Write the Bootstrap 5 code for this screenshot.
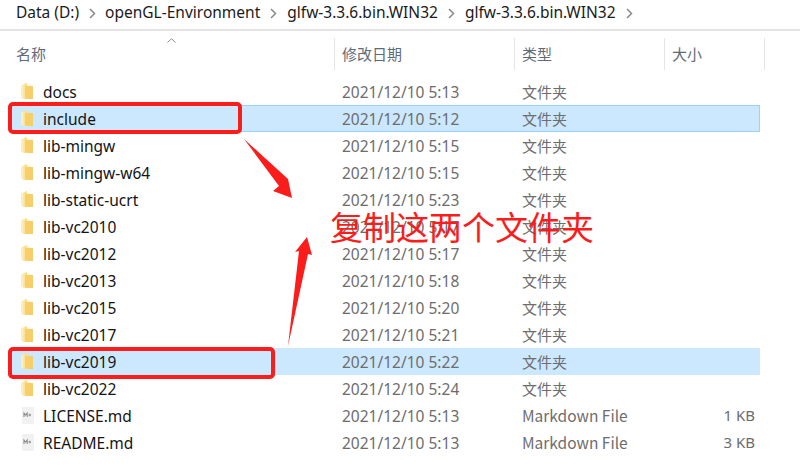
<!DOCTYPE html>
<html lang="zh-CN">
<head>
<meta charset="utf-8">
<title>glfw-3.3.6.bin.WIN32</title>
<link href="https://cdn.jsdelivr.net/npm/bootstrap@5.3.0/dist/css/bootstrap.min.css" rel="stylesheet">
<style>
html,body{background:#fff;margin:0;height:469px;overflow:hidden}
body{position:relative;width:800px;font-family:"Noto Sans","Noto Sans CJK SC",sans-serif;font-size:15.5px;color:#1b1b1b}
.crumbs{height:31px;border-bottom:2px solid #e3e3e3;padding-left:16px;padding-bottom:3px;align-items:center;white-space:nowrap}
.crumbs svg{flex:none}
.sep1{margin:0 10px}
.sep1.first{margin:0 9px 0 10px}
.heads{height:32px;margin-top:7px;color:#5f6b78;font-size:15px;font-family:"Noto Sans CJK SC","Noto Sans",sans-serif}
.hcell{height:32px;padding-left:7px;border-right:1px solid #e5e5e5;line-height:31px}
.hname{width:335px;padding-left:16px;position:relative}
.hdate{width:180px}.htype{width:150px}.hsize{width:100px}
.caret{position:absolute;left:167px;top:0;width:9px;height:5px}
.ftable{margin-top:8px;padding-left:10px}
.frow{height:27px;width:750px;align-items:center;border:1px solid transparent;line-height:25px}
.frow.sel{background:#cce8ff;border-color:#99d1ff}
.frow.sel2{background:#cce8ff;border-color:#cce8ff}
.fico{width:32px;padding-left:10px;flex:none}
.fname{width:299px;flex:none;color:#141414;padding-top:2px}
.fdate{width:180px;flex:none;color:#6d6d6d;padding-top:2px}
.ftype{width:150px;flex:none;color:#6d6d6d;font-size:15px;font-family:"Noto Sans CJK SC","Noto Sans",sans-serif}
.ftype.latin{font-size:15.5px}
.fsize{flex:1;text-align:right;padding-right:4px;color:#6d6d6d;font-size:15px}
.redbox{position:absolute;border:4px solid #fb1c1c;border-radius:5px}
.rb1{left:8px;top:102px;width:234px;height:32px}
.rb2{left:8px;top:347px;width:267px;height:32px}
.marks{position:absolute;left:0;top:0;pointer-events:none}
.bigtext{position:absolute;left:330px;top:203px;font-family:"Noto Sans CJK SC",sans-serif;font-size:33px;line-height:46px;color:#fb1c1c;white-space:nowrap}
</style>
</head>
<body>
<svg width="0" height="0" class="d-block" aria-hidden="true">
<defs>
<linearGradient id="fg" x1="0" y1="0" x2="1" y2="0"><stop offset="0" stop-color="#fde9a8"/><stop offset=".55" stop-color="#f8d474"/><stop offset="1" stop-color="#f1c154"/></linearGradient>
<symbol id="folder" viewBox="0 0 12 17"><path d="M0 2.5 2 1.6V15.6L0 14.8Z" fill="#fdeebd"/><path d="M2 1.6 6 0V2.5L12 3.2V16H2Z" fill="url(#fg)"/><path d="M4 3 12 4V15.6H4Z" fill="#f6cf6b"/></symbol>
<symbol id="mdfile" viewBox="0 0 14 17"><path d="M1 0H13V17H1Z" fill="#f1f1f1"/><path d="M3 10V6L4.6 8 6.2 6V10M7.5 8H10M8.8 6.8V9.2" fill="none" stroke="#8b8b8b" stroke-width="1.1"/></symbol>
<symbol id="chev" viewBox="0 0 7 11"><path d="M1 1 5.5 5.5 1 10" fill="none" stroke="#8a8a8a" stroke-width="1.5"/></symbol>
</defs>
</svg>

<div class="crumbs d-flex">
  <span>Data (D:)</span>
  <svg class="sep1 first" width="7" height="11"><use href="#chev"/></svg>
  <span>openGL-Environment</span>
  <svg class="sep1" width="7" height="11"><use href="#chev"/></svg>
  <span>glfw-3.3.6.bin.WIN32</span>
  <svg class="sep1" width="7" height="11"><use href="#chev"/></svg>
  <span>glfw-3.3.6.bin.WIN32</span>
  <svg class="sep1" width="7" height="11"><use href="#chev"/></svg>
</div>

<div class="heads d-flex">
  <div class="hcell hname">名称<svg class="caret" viewBox="0 0 9 5"><path d="M.5 4.5 4.5.7 8.5 4.5" fill="none" stroke="#8a8a8a"/></svg></div>
  <div class="hcell hdate">修改日期</div>
  <div class="hcell htype">类型</div>
  <div class="hcell hsize">大小</div>
</div>

<div class="ftable" id="files">
  <div class="frow d-flex"><div class="fico"><svg class="d-block" width="12" height="17"><use href="#folder"/></svg></div><div class="fname">docs</div><div class="fdate">2021/12/10 5:13</div><div class="ftype">文件夹</div></div>
  <div class="frow sel d-flex"><div class="fico"><svg class="d-block" width="12" height="17"><use href="#folder"/></svg></div><div class="fname">include</div><div class="fdate">2021/12/10 5:12</div><div class="ftype">文件夹</div></div>
  <div class="frow d-flex"><div class="fico"><svg class="d-block" width="12" height="17"><use href="#folder"/></svg></div><div class="fname">lib-mingw</div><div class="fdate">2021/12/10 5:15</div><div class="ftype">文件夹</div></div>
  <div class="frow d-flex"><div class="fico"><svg class="d-block" width="12" height="17"><use href="#folder"/></svg></div><div class="fname">lib-mingw-w64</div><div class="fdate">2021/12/10 5:15</div><div class="ftype">文件夹</div></div>
  <div class="frow d-flex"><div class="fico"><svg class="d-block" width="12" height="17"><use href="#folder"/></svg></div><div class="fname">lib-static-ucrt</div><div class="fdate">2021/12/10 5:23</div><div class="ftype">文件夹</div></div>
  <div class="frow d-flex"><div class="fico"><svg class="d-block" width="12" height="17"><use href="#folder"/></svg></div><div class="fname">lib-vc2010</div><div class="fdate">2021/12/10 5:17</div><div class="ftype">文件夹</div></div>
  <div class="frow d-flex"><div class="fico"><svg class="d-block" width="12" height="17"><use href="#folder"/></svg></div><div class="fname">lib-vc2012</div><div class="fdate">2021/12/10 5:17</div><div class="ftype">文件夹</div></div>
  <div class="frow d-flex"><div class="fico"><svg class="d-block" width="12" height="17"><use href="#folder"/></svg></div><div class="fname">lib-vc2013</div><div class="fdate">2021/12/10 5:18</div><div class="ftype">文件夹</div></div>
  <div class="frow d-flex"><div class="fico"><svg class="d-block" width="12" height="17"><use href="#folder"/></svg></div><div class="fname">lib-vc2015</div><div class="fdate">2021/12/10 5:20</div><div class="ftype">文件夹</div></div>
  <div class="frow d-flex"><div class="fico"><svg class="d-block" width="12" height="17"><use href="#folder"/></svg></div><div class="fname">lib-vc2017</div><div class="fdate">2021/12/10 5:21</div><div class="ftype">文件夹</div></div>
  <div class="frow sel2 d-flex"><div class="fico"><svg class="d-block" width="12" height="17"><use href="#folder"/></svg></div><div class="fname">lib-vc2019</div><div class="fdate">2021/12/10 5:22</div><div class="ftype">文件夹</div></div>
  <div class="frow d-flex"><div class="fico"><svg class="d-block" width="12" height="17"><use href="#folder"/></svg></div><div class="fname">lib-vc2022</div><div class="fdate">2021/12/10 5:24</div><div class="ftype">文件夹</div></div>
  <div class="frow d-flex"><div class="fico"><svg class="d-block" width="14" height="17"><use href="#mdfile"/></svg></div><div class="fname">LICENSE.md</div><div class="fdate">2021/12/10 5:13</div><div class="ftype latin">Markdown File</div><div class="fsize">1 KB</div></div>
  <div class="frow d-flex"><div class="fico"><svg class="d-block" width="14" height="17"><use href="#mdfile"/></svg></div><div class="fname">README.md</div><div class="fdate">2021/12/10 5:13</div><div class="ftype latin">Markdown File</div><div class="fsize">3 KB</div></div>
</div>

<div class="redbox rb1"></div>
<div class="redbox rb2"></div>
<svg class="marks" width="800" height="469">
  <path d="M244 139 288 179 292 198 273 191 279 186Z" fill="#fb1c1c"/>
  <path d="M288 346 299 251 295 252 307 237 312 255 308 254Z" fill="#fb1c1c"/>
</svg>
<div class="bigtext">复制这两个文件夹</div>
</body>
</html>
